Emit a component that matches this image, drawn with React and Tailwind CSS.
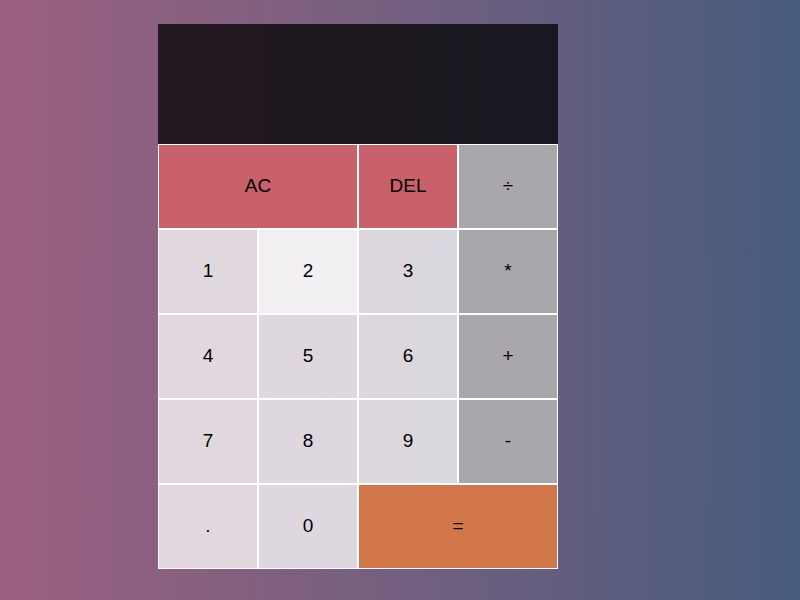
import React from "react";

const keys = [
	{ label: "AC", span: 2, kind: "clear" },
	{ label: "DEL", kind: "clear" },
	{ label: "÷", kind: "op" },
	{ label: "1" },
	{ label: "2", active: true },
	{ label: "3" },
	{ label: "*", kind: "op" },
	{ label: "4" },
	{ label: "5" },
	{ label: "6" },
	{ label: "+", kind: "op" },
	{ label: "7" },
	{ label: "8" },
	{ label: "9" },
	{ label: "-", kind: "op" },
	{ label: "." },
	{ label: "0" },
	{ label: "=", span: 2, kind: "equals" },
];

const keyClass = (key) => {
	if (key.kind === "clear") return "bg-[#c9616a]";
	if (key.kind === "op") return "bg-[#a9a6ac]";
	if (key.kind === "equals") return "bg-[#d07649]";
	if (key.active) return "bg-white/90";
	return "bg-white/75";
};

const App = () => {
	return (
		<div className="min-h-screen w-full bg-linear-to-r from-[#9c6081] to-[#465b7d] flex justify-start pl-[158px] pt-[24px] font-['Liberation_Sans',Arial,sans-serif]">
			<div className="grid grid-cols-[repeat(4,100px)] grid-rows-[120px_repeat(5,85px)] h-fit">
				<div className="col-span-4 bg-black/75"></div>
				{keys.map((key) => (
					<button
						key={key.label}
						type="button"
						className={`${key.span === 2 ? "col-span-2" : ""} ${keyClass(key)} border border-white text-[19px] text-black flex items-center justify-center`}
					>
						{key.label}
					</button>
				))}
			</div>
		</div>
	);
};

export default App;
